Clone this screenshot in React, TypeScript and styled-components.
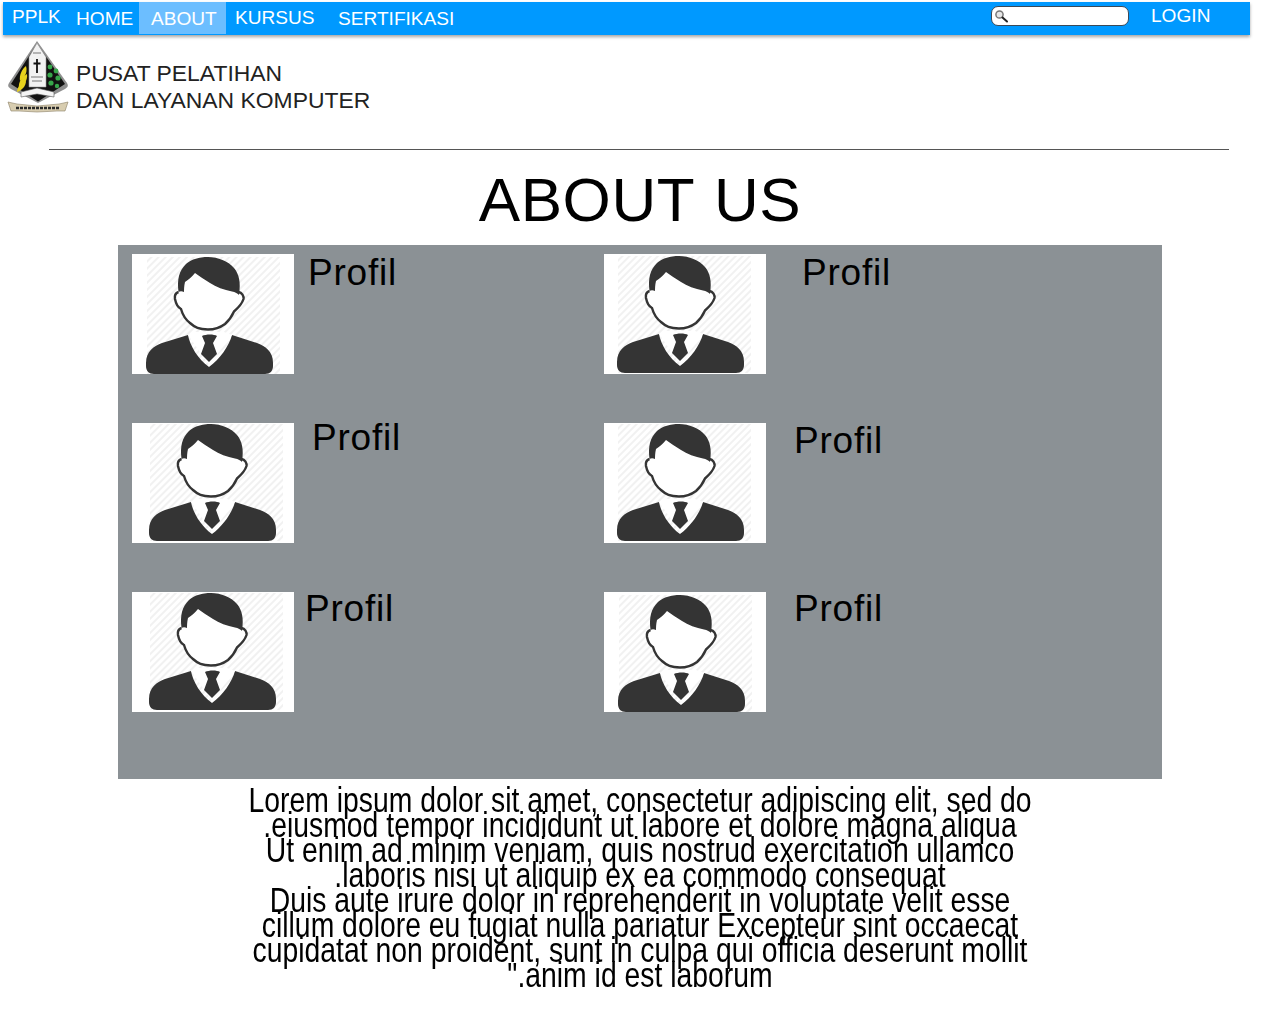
import React from "react";
import styled, { createGlobalStyle } from "styled-components";

const Global = createGlobalStyle`
  html, body { margin: 0; padding: 0; background: #fff; }
  body { font-family: "Liberation Sans", Arial, sans-serif; color: #111; overflow: hidden; }
`;
const Page = styled.div`
  width: 1280px;
  height: 1024px;
  padding-top: 2px;
  box-sizing: border-box;
`;
const NavBar = styled.nav`
  width: 1247px;
  height: 33px;
  margin-left: 3px;
  background: #0099ff;
  box-shadow: 0 2px 3px rgba(0, 0, 0, 0.35);
  display: flex;
  align-items: flex-start;
  color: #fff;
  font-size: 19.1px;
`;
const NavItem = styled.a<{ $w: number; $pad: number; $top: number; $active?: boolean }>`
  flex: none;
  box-sizing: border-box;
  width: ${(p) => p.$w}px;
  height: 32px;
  padding-left: ${(p) => p.$pad}px;
  padding-top: ${(p) => p.$top}px;
  line-height: 24px;
  background: ${(p) => (p.$active ? "#6cbeff" : "transparent")};
`;
const Search = styled.div`
  flex: none;
  box-sizing: border-box;
  width: 138px;
  height: 20px;
  margin: 4px 0 0 539px;
  padding: 2px 0 0 2px;
  background: #fff;
  border: 1.5px solid #3c4a58;
  border-radius: 7px;
  display: flex;
`;
const Login = styled.a`
  flex: none;
  margin: 2px 0 0 22px;
  line-height: 24px;
`;
const Brand = styled.header`
  display: flex;
  align-items: flex-start;
  padding: 5px 0 0 7px;
  height: 111px;
  box-sizing: border-box;
`;
const EmblemBox = styled.div`
  flex: none;
  width: 62px;
  height: 74px;
  filter: blur(0.4px);
`;
const BrandText = styled.div`
  margin: 20px 0 0 7px;
  font-size: 22.9px;
  line-height: 27px;
  color: #222;
`;
const Rule = styled.hr`
  width: 1180px;
  margin: 3px 0 0 49px;
  border: 0;
  border-top: 1px solid #555;
`;
const Title = styled.h1`
  margin: 14px 0 0;
  text-align: center;
  font-size: 62px;
  line-height: 72px;
  font-weight: 400;
  color: #000;
  letter-spacing: 0.6px;
  word-spacing: 2px;
`;
const Panel = styled.section`
  width: 1044px;
  height: 534px;
  margin: 9px 0 0 118px;
  padding: 9px 0 0 14px;
  box-sizing: border-box;
  background: #8b9195;
  display: grid;
  grid-template-columns: 472px 472px;
  grid-auto-rows: 169px;
`;
const Profile = styled.article`
  display: flex;
  align-items: flex-start;
`;
const Photo = styled.div`
  flex: none;
  width: 162px;
  height: 120px;
  background: #fff;
  overflow: hidden;
`;
const Name = styled.div<{ $x: number; $y: number }>`
  margin-left: ${(p) => p.$x}px;
  margin-top: ${(p) => p.$y}px;
  font-size: 37px;
  line-height: 38px;
  color: #000;
  letter-spacing: 0.8px;
`;
const Lorem = styled.div`
  width: 1280px;
  padding-top: 8px;
  direction: rtl;
  text-align: center;
  font-size: 35px;
  line-height: 25px;
  color: #000;
  transform: scaleX(0.81);
  white-space: nowrap;
`;
const LoremLine = styled.div``;

const Person = ({ dx, dy, id }: { dx: number; dy: number; id: string }) => (
  <svg width="162" height="120" viewBox="0 0 162 120">
    <defs>
      <pattern id={id} width="5" height="5" patternUnits="userSpaceOnUse" patternTransform="rotate(-45)">
        <rect width="5" height="2" fill="#f1f1f1" />
      </pattern>
    </defs>
    <g transform={`translate(${dx} ${dy})`}>
      <rect x="15" y="3" width="133" height="117" fill={`url(#${id})`} />
      <path
        fill="#343434"
        d="M14 109C14 97 22 92 30 89L56 81C58 92 66 105 77 113C88 105 97 92 100 81L125 89C133 92 141 97 141 109V112C141 117 138 120 133 120H22C17 120 14 117 14 112Z"
      />
      <path fill="#fff" d="M56 81L77 111L100 81L92 78H63Z" />
      <path fill="#343434" d="M70 82C74 80 82 80 85 82L81 89L85 100L77 108L69 100L73 89Z" />
      <path
        fill="#fff"
        d="M46.500 38C43.500 39 42.500 42 43 45C44 50 46 53.500 49 55C51 62 54 66 58 69C63 73.500 67 75.500 76 75.500C84 75.500 89 73 93 70C97 66.500 100 62 102 57.500C106 54 110 50 111.500 45C112 42 110 38.500 106.500 38L104 20H52Z"
      />
      <path
        fill="none"
        stroke="#343434"
        strokeWidth="2.400"
        d="M46.500 38C43.500 39 42.500 42 43 45C44 50 46 53.500 49 55C51 62 54 66 58 69C63 73.500 67 75.500 76 75.500C84 75.500 89 73 93 70C97 66.500 100 62 102 57.500C106 54 110 50 111.500 45C112 42 110 38.500 106.500 38"
      />
      <path
        fill="#343434"
        d="M46.500 38C45 25 47 17 54 10C60 5 67 3 76 3C86 3 96 7 102 14C107 20 109 28 107 41C106 40 103 38 100 37.500C92 36 84 33 78 29C72 25 67 22 63 19C60 23 56 26 53 28C52 32 52 36 52 38C50 37 48 37 46.500 38Z"
      />
    </g>
  </svg>
);

const Emblem = () => (
  <svg width="62" height="74" viewBox="0 0 62 74">
    <path d="M30 1L60 43C61.500 45.500 61 47 58 49L31 63L4 49C1 47 0.500 45.500 2 43Z" fill="#8f8f8f" />
    <path d="M30 3.500L58 44L31 61.500L4 44Z" fill="#111" />
    <path d="M30 3L39 17V47H22V17Z" fill="#f2f2f2" stroke="#999" strokeWidth="0.600" />
    <path d="M30 19V33M26.500 23.500H33.500" stroke="#111" strokeWidth="1.800" />
    <path d="M26 13H34M24 37H36M25 41H35" stroke="#777" strokeWidth="1" />
    <path d="M19 26C21 33 17 38 13 41C12 35 15 29 19 26Z" fill="#e8d21d" />
    <path d="M20 34C21 40 17 45 12 48C11 42 15 37 20 34Z" fill="#e8d21d" />
    <path d="M19 41C19 46 15 50 10 52C10 47 14 43 19 41Z" fill="#e8d21d" />
    <circle cx="43" cy="27" r="2.400" fill="#37a64a" />
    <circle cx="49" cy="31" r="2.400" fill="#37a64a" />
    <circle cx="43" cy="35" r="2.600" fill="#37a64a" />
    <circle cx="51" cy="38" r="2.600" fill="#37a64a" />
    <circle cx="44" cy="43" r="2.600" fill="#37a64a" />
    <circle cx="50" cy="46" r="2.200" fill="#37a64a" />
    <path d="M14 52L30 48L47 52V57L30 54L14 57Z" fill="#f4f4f4" stroke="#555" strokeWidth="0.600" />
    <path d="M1 62L10 64L30 66L52 64L61 62L58 71H50L30 72L12 71H4Z" fill="#d8cdb0" stroke="#8b8066" strokeWidth="0.600" />
    <path d="M9 68H52" stroke="#2a2a2a" strokeWidth="2.400" strokeDasharray="3 1" />
  </svg>
);

const MagIcon = () => (
  <svg width="16" height="14" viewBox="0 0 16 14">
    <circle cx="5.500" cy="5.500" r="3.600" fill="#e6e6e6" stroke="#777" strokeWidth="1.500" />
    <path d="M8.500 8.500L13 12.500" stroke="#222" strokeWidth="2" strokeLinecap="round" />
  </svg>
);

const profiles = [
  { dx: 0, dy: 0, x: 14, y: 0 },
  { dx: -1, dy: -1, x: 36, y: 0 },
  { dx: 3, dy: -2, x: 18, y: -4 },
  { dx: -1, dy: -2, x: 28, y: -1 },
  { dx: 3, dy: -2, x: 11, y: -2 },
  { dx: 0, dy: 0, x: 28, y: -2 },
];

const lines = [
  "Lorem ipsum dolor sit amet, consectetur adipiscing elit, sed do",
  "eiusmod tempor incididunt ut labore et dolore magna aliqua.",
  "Ut enim ad minim veniam, quis nostrud exercitation ullamco",
  "laboris nisi ut aliquip ex ea commodo consequat.",
  "Duis aute irure dolor in reprehenderit in voluptate velit esse",
  "cillum dolore eu fugiat nulla pariatur Excepteur sint occaecat",
  "cupidatat non proident, sunt in culpa qui officia deserunt mollit",
  'anim id est laborum."',
];

export default function App() {
  return (
    <Page>
      <Global />
      <NavBar>
        <NavItem $w={63} $pad={9} $top={3}>PPLK</NavItem>
        <NavItem $w={73} $pad={10} $top={5}>HOME</NavItem>
        <NavItem $w={87} $pad={12} $top={5} $active>ABOUT</NavItem>
        <NavItem $w={103} $pad={9} $top={4}>KURSUS</NavItem>
        <NavItem $w={123} $pad={9} $top={5}>SERTIFIKASI</NavItem>
        <Search><MagIcon /></Search>
        <Login>LOGIN</Login>
      </NavBar>
      <Brand>
        <EmblemBox><Emblem /></EmblemBox>
        <BrandText>PUSAT PELATIHAN<br />DAN LAYANAN KOMPUTER</BrandText>
      </Brand>
      <Rule />
      <Title>ABOUT US</Title>
      <Panel>
        {profiles.map((p, i) => (
          <Profile key={i}>
            <Photo><Person dx={p.dx} dy={p.dy} id={`hatch${i}`} /></Photo>
            <Name $x={p.x} $y={p.y}>Profil</Name>
          </Profile>
        ))}
      </Panel>
      <Lorem>
        {lines.map((l) => <LoremLine key={l}>{l}</LoremLine>)}
      </Lorem>
    </Page>
  );
}
